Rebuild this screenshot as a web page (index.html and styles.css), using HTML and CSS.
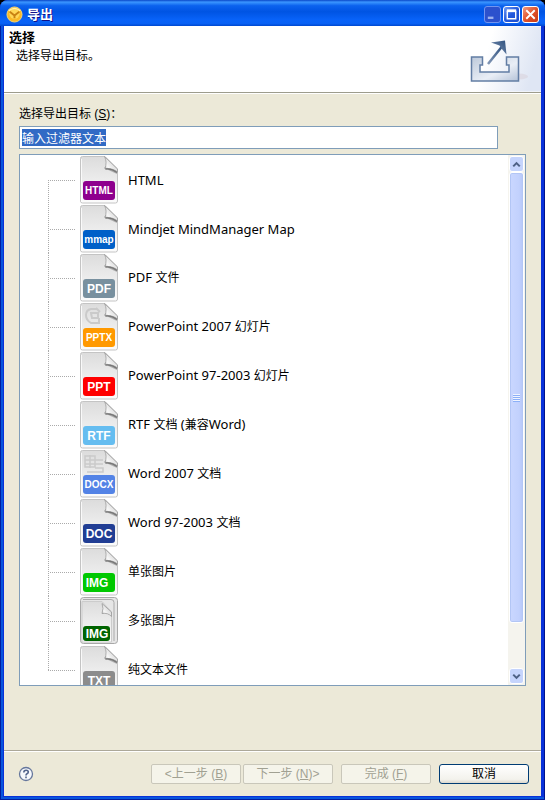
FILE: index.html
```html
<!DOCTYPE html>
<html lang="zh-CN">
<head>
<meta charset="utf-8">
<title>导出</title>
<link rel="stylesheet" href="styles.css">
</head>
<body>
<svg class="defs" aria-hidden="true">
  <defs>
    <linearGradient id="paper" x1="0" y1="0" x2="0" y2="1">
      <stop offset="0" stop-color="#dcdcdc"/><stop offset="1" stop-color="#fcfcfc"/>
    </linearGradient>
    <linearGradient id="fold" x1="0" y1="1" x2="1" y2="0">
      <stop offset="0" stop-color="#aaaaaa"/><stop offset=".3" stop-color="#f8f8f8"/><stop offset="1" stop-color="#bbbbbb"/>
    </linearGradient>
    <symbol id="page" viewBox="0 0 40 48">
      <path d="M3.500 .5H26L38.500 13V45a2 2 0 0 1-2 2H3.500a2 2 0 0 1-2-2V2.500a2 2 0 0 1 2-2Z" fill="url(#paper)" stroke="#c4c4c4"/>
      <path d="M2.500 46V3" stroke="#fff" opacity=".8"/>
      <path d="M25 12l13 6v-4l-11-4Z" fill="#8a8a8a" opacity=".6"/>
      <path d="M25.500 .5C27.500 4 27.500 8 26 13C30 12 35 13 38.500 16V13Z" fill="url(#fold)" stroke="#9c9c9c" stroke-width=".8"/>
      <path d="M26.500 13q6-1 11.500 3.500" fill="none" stroke="#777" stroke-width="1.300"/>
    </symbol>
  </defs>
</svg>
<main class="window">
  <header class="titlebar">
    <svg class="logo" viewBox="0 0 18 18" aria-hidden="true">
      <circle cx="9" cy="9" r="8" fill="#f9b928" stroke="#f6d878"/>
      <circle cx="9" cy="8" r="5.500" fill="#ffd756"/>
      <path d="M4 6l5 4 5-4M9 10v3" fill="none" stroke="#c98212" stroke-width="2"/>
      <path d="M3 5q6-5 12 0" fill="none" stroke="#fff2b4" stroke-width="1.500"/>
    </svg>
    <h1>导出</h1>
    <div class="controls">
      <button class="control minimize" aria-label="最小化" disabled><svg viewBox="0 0 16 16"><path d="M3 11.500h6" stroke="#9eb3ef" stroke-width="2.500"/></svg></button>
      <button class="control" aria-label="最大化"><svg viewBox="0 0 16 16"><path d="M3.500 4v8.500h9V4" fill="none" stroke="#fff" stroke-width="1.500"/><path d="M3 4h10" stroke="#fff" stroke-width="3"/></svg></button>
      <button class="control close" aria-label="关闭"><svg viewBox="0 0 16 16"><path d="M3.500 3.500l9 9m0-9l-9 9" stroke="#fff" stroke-width="2"/></svg></button>
    </div>
  </header>
  <div class="client">
    <section class="banner">
      <div class="heading"><h2>选择</h2><p>选择导出目标。</p></div>
      <svg class="export" viewBox="0 0 75 65" aria-hidden="true">
        <defs>
          <linearGradient id="sky" x1="0" y1="0" x2="1" y2=".25"><stop offset=".35" stop-color="#fff"/><stop offset="1" stop-color="#dfe6f4"/></linearGradient>
          <linearGradient id="tray" x1="0" y1="0" x2="1" y2="1"><stop offset="0" stop-color="#bdc9da"/><stop offset=".6" stop-color="#e9eef6"/><stop offset="1" stop-color="#b5c3d8"/></linearGradient>
          <linearGradient id="arrow" x1="0" y1="1" x2="1" y2="0"><stop offset="0" stop-color="#8297b6"/><stop offset="1" stop-color="#2f517f"/></linearGradient>
        </defs>
        <rect width="75" height="65" fill="url(#sky)"/>
        <ellipse cx="53" cy="50" rx="9" ry="3" fill="#d8d2dc" opacity=".6"/>
        <path d="M5.500 30.500h11v8h-2.500v7h29v-7h-2.500v-8h12v24h-47Z" fill="url(#tray)" stroke="#627da4" stroke-width="1.500"/>
        <path d="M22 37.500L36 20" stroke="url(#arrow)" stroke-width="2.500" fill="none"/>
        <path d="M25 16L39 14l1.500 14-5-6-2-3Z" fill="url(#arrow)"/>
      </svg>
    </section>
    <section class="content">
      <label for="filter">选择导出目标 (<u>S</u>)：</label>
      <input id="filter" type="text" value="输入过滤器文本" autocomplete="off" spellcheck="false">
      <div class="panel">
        <ul class="tree">
          <li><span class="branch"></span><svg class="file" viewBox="0 0 40 48"><use href="#page"/><rect x="4" y="25" width="32" height="19" rx="3" fill="#8e008e"/><text x="20" y="38" font-size="10">HTML</text></svg><span>HTML</span></li>
          <li><span class="branch"></span><svg class="file" viewBox="0 0 40 48"><use href="#page"/><rect x="4" y="25" width="32" height="19" rx="3" fill="#0060c8"/><text x="20" y="38" font-size="10">mmap</text></svg><span>Mindjet MindManager Map</span></li>
          <li><span class="branch"></span><svg class="file" viewBox="0 0 40 48"><use href="#page"/><rect x="4" y="25" width="32" height="19" rx="3" fill="#78909f"/><text x="20" y="39" font-size="12">PDF</text></svg><span>PDF <span class="han">文件</span></span></li>
          <li><span class="branch"></span><svg class="file" viewBox="0 0 40 48"><use href="#page"/><path d="M18 6h-6q-5 1-5 6t5 8h8v-5M12 10h7v5h-6ZM17 5l4 4" fill="none" stroke="#cacaca" stroke-width="2"/><rect x="4" y="25" width="32" height="19" rx="3" fill="#ff9900"/><text x="20" y="38" font-size="10">PPTX</text></svg><span>PowerPoint 2007 <span class="han">幻灯片</span></span></li>
          <li><span class="branch"></span><svg class="file" viewBox="0 0 40 48"><use href="#page"/><rect x="4" y="25" width="32" height="19" rx="3" fill="#ff0000"/><text x="20" y="39" font-size="12">PPT</text></svg><span>PowerPoint 97-2003 <span class="han">幻灯片</span></span></li>
          <li><span class="branch"></span><svg class="file" viewBox="0 0 40 48"><use href="#page"/><rect x="4" y="25" width="32" height="19" rx="3" fill="#65bdf0"/><text x="20" y="39" font-size="12">RTF</text></svg><span>RTF <span class="han">文档</span> (<span class="han">兼容</span>Word)</span></li>
          <li><span class="branch"></span><svg class="file" viewBox="0 0 40 48"><use href="#page"/><path d="M6 6h10v11H6ZM6 10h18M6 14h18M16 18h8v4H8M11 5v13" fill="none" stroke="#cacaca" stroke-width="1.500"/><rect x="4" y="25" width="32" height="19" rx="3" fill="#5383e6"/><text x="20" y="38" font-size="10">DOCX</text></svg><span>Word 2007 <span class="han">文档</span></span></li>
          <li><span class="branch"></span><svg class="file" viewBox="0 0 40 48"><use href="#page"/><rect x="4" y="25" width="32" height="19" rx="3" fill="#213e94"/><text x="20" y="39" font-size="12">DOC</text></svg><span>Word 97-2003 <span class="han">文档</span></span></li>
          <li><span class="branch"></span><svg class="file" viewBox="0 0 40 48"><use href="#page"/><rect x="4" y="25" width="32" height="19" rx="3" fill="#00c800"/><text x="18" y="39" font-size="12">IMG</text></svg><span class="han">单张图片</span></li>
          <li><span class="branch"></span><svg class="file" viewBox="0 0 40 48"><rect x="1.500" y=".5" width="37" height="46" rx="3" fill="#e6e6e6" stroke="#a8a8a8"/><path d="M4 2.500H32q3 0 3 3V44" fill="none" stroke="#aaa"/><path d="M3 4.500H23L32.500 15V45H3Z" fill="url(#paper)" stroke="#ccc"/><path d="M23 6.500q2 5 0 10 6-1 9.500 3V15Z" fill="url(#fold)" stroke="#999" stroke-width=".8"/><rect x="4" y="29" width="27" height="15" rx="3" fill="#006400"/><text x="18" y="41" font-size="12">IMG</text></svg><span class="han">多张图片</span></li>
          <li><span class="branch"></span><svg class="file" viewBox="0 0 40 48"><use href="#page"/><rect x="4" y="25" width="32" height="19" rx="3" fill="#8c8c8c"/><text x="20" y="39" font-size="12">TXT</text></svg><span class="han">纯文本文件</span></li>
        </ul>
        <div class="scrollbar">
          <button class="step" aria-label="向上滚动"><svg viewBox="0 0 14 14"><path d="M3.500 9L7 5.500 10.500 9" fill="none" stroke="#4d6185" stroke-width="2.200"/></svg></button>
          <div class="track"><div class="thumb"><i></i></div></div>
          <button class="step" aria-label="向下滚动"><svg viewBox="0 0 14 14"><path d="M3.500 5L7 8.500 10.500 5" fill="none" stroke="#4d6185" stroke-width="2.200"/></svg></button>
        </div>
      </div>
    </section>
    <footer class="actions">
      <button class="help" aria-label="帮助"><svg viewBox="0 0 16 16"><circle cx="8" cy="8" r="6.500" fill="#f6f8fc" stroke="#66779c" stroke-width="1.300"/><path d="M5.800 6.500q0-2.300 2.300-2.300 2.200 0 2.200 1.800 0 1.200-1.300 1.700-1 .5-1 1.700M8 10.600v1.700" fill="none" stroke="#53648c" stroke-width="1.600"/></svg></button>
      <div class="pair">
        <button class="push" disabled>&lt;上一步 (<u>B</u>)</button>
        <button class="push" disabled>下一步 (<u>N</u>)&gt;</button>
      </div>
      <button class="push" disabled>完成 (<u>F</u>)</button>
      <button class="push cancel">取消</button>
    </footer>
  </div>
</main>
<script src="script.js"></script>
</body>
</html>
```

FILE: styles.css
```css
* {
  box-sizing: border-box;
}

body {
  margin: 0;
  background: #000;
  font: 12px/16px "Liberation Sans", "Noto Sans CJK SC", sans-serif;
  color: #000;
}

h1, h2, p, ul {
  margin: 0;
  padding: 0;
}

button {
  padding: 0;
  font: inherit;
}

svg {
  display: block;
}

.defs {
  position: absolute;
  width: 0;
  height: 0;
}

.window {
  display: flex;
  flex-direction: column;
  min-height: 100vh;
  padding: 0 4px 4px;
  background: #0831d9;
  border-radius: 8px 8px 0 0;
  box-shadow: inset 1px -1px #001ea0, inset -1px 0 #00138c, inset 3px -3px #0855dd, inset -3px 0 #0831d9;
}

.titlebar {
  display: flex;
  align-items: center;
  height: 26px;
  margin: 0 -4px;
  padding: 3px 6px 0;
  gap: 4px;
  border-radius: 8px 8px 0 0;
  background: linear-gradient(#0a48c8 0, #3b96ff 8%, #0b62ee 22%, #0054e3 45%, #0862f8 75%, #0861f5 90%, #0048cf 100%);
}

.titlebar h1 {
  flex: 1;
  font: bold 13px/18px "Liberation Sans", "Noto Sans CJK SC", sans-serif;
  color: #fff;
  text-shadow: 1px 1px #0f1089;
}

.logo {
  width: 17px;
  height: 17px;
}

.controls {
  display: flex;
  gap: 2px;
}

.control {
  width: 17px;
  height: 17px;
  border: 1px solid #fff;
  border-radius: 3px;
  background: linear-gradient(135deg, #6f9bf5, #2459dc 50%, #1d4fd0);
}

.control.minimize {
  border-color: #7294ef;
  background: #2c51cd;
}

.control.close {
  background: linear-gradient(135deg, #f09c82, #e0522b 50%, #c83a16);
}

.client {
  display: flex;
  flex: 1;
  flex-direction: column;
  background: #ece9d8;
}

.banner {
  display: flex;
  justify-content: space-between;
  height: 67px;
  border-bottom: 1px solid #9d9c8d;
  box-shadow: 0 1px #fff;
  background: #fff;
}

.heading {
  padding: 3px 5px;
}

.heading h2 {
  font-size: 13px;
  line-height: 18px;
}

.heading p {
  padding-left: 7px;
  line-height: 18px;
}

.export {
  width: 75px;
  height: 66px;
}

.content {
  display: flex;
  flex: 1;
  flex-direction: column;
  padding: 13px 15px 64px;
}

.content label {
  line-height: 16px;
}

#filter {
  height: 23px;
  margin: 4px 28px 5px 0;
  padding: 0 2px;
  border: 1px solid #7f9db9;
  outline: 0;
  background: #fff;
  font: 12px/18px "Noto Sans CJK SC", sans-serif;
}

#filter::selection {
  background: #316ac5;
  color: #fff;
}

.panel {
  display: flex;
  flex: 1 1 0;
  min-height: 0;
  border: 1px solid #7f9db9;
  background: #fff;
}

.tree {
  flex: 1;
  height: 530px;
  padding-left: 28px;
  overflow: hidden;
  list-style: none;
  font: 13px/18px "Noto Sans", "Noto Sans CJK SC", sans-serif;
}

.han {
  font-size: 12px;
}

.tree li {
  display: flex;
  align-items: center;
  height: 49px;
}

.branch {
  align-self: stretch;
  width: 27px;
  margin-right: 4px;
  background:
    repeating-linear-gradient(#aaa 0 1px, #fff 1px 2px) 0 0 / 1px 100% no-repeat,
    repeating-linear-gradient(90deg, #aaa 0 1px, #fff 1px 2px) 0 25px / 100% 1px no-repeat;
}

.tree li:first-child .branch {
  background-position: 0 25px, 0 25px;
}

.tree li:last-child .branch {
  background-size: 1px 25px, 100% 1px;
}

.file {
  width: 40px;
  height: 48px;
  margin-right: 9px;
}

.file text {
  fill: #fff;
  font-family: "Liberation Sans", sans-serif;
  font-weight: bold;
  text-anchor: middle;
}

.scrollbar {
  display: flex;
  flex-direction: column;
  width: 17px;
  padding: 1px;
  background: #f5f4ee;
}

.step {
  width: 15px;
  height: 16px;
  border: 1px solid #fff;
  border-radius: 3px;
  background: #c5d4fc;
}

.track {
  flex: 1;
}

.thumb {
  display: flex;
  align-items: center;
  justify-content: center;
  height: 91%;
  border: 1px solid #fff;
  border-radius: 3px;
  box-shadow: inset 0 0 0 1px #b3c6f5;
  background: linear-gradient(90deg, #cad7ff, #c2d1fd 70%, #b4c6f7);
}

.thumb i {
  width: 7px;
  height: 8px;
  background: repeating-linear-gradient(#f0f4ff 0 1px, #8cb0f8 1px 2px);
}

.actions {
  display: flex;
  align-items: center;
  gap: 8px;
  height: 46px;
  padding: 0 12px 0 14px;
  border-top: 1px solid #aca899;
  box-shadow: inset 0 1px #fff;
}

.help {
  width: 16px;
  height: 16px;
  margin-right: auto;
  border: 0;
  background: none;
}

.pair {
  display: flex;
  gap: 2px;
}

.push {
  width: 90px;
  height: 20px;
  border: 1px solid #c9c7ba;
  border-radius: 2px;
  background: #f5f4ea;
  line-height: 16px;
  color: #a1a192;
}

.push.cancel {
  border-color: #003c74;
  border-radius: 3px;
  background: linear-gradient(#fff, #f3f2ec 80%, #dcd8cd);
  color: #000;
}
```

FILE: script.js
```js
const filter = document.getElementById("filter");
filter.focus();
filter.select();
```
